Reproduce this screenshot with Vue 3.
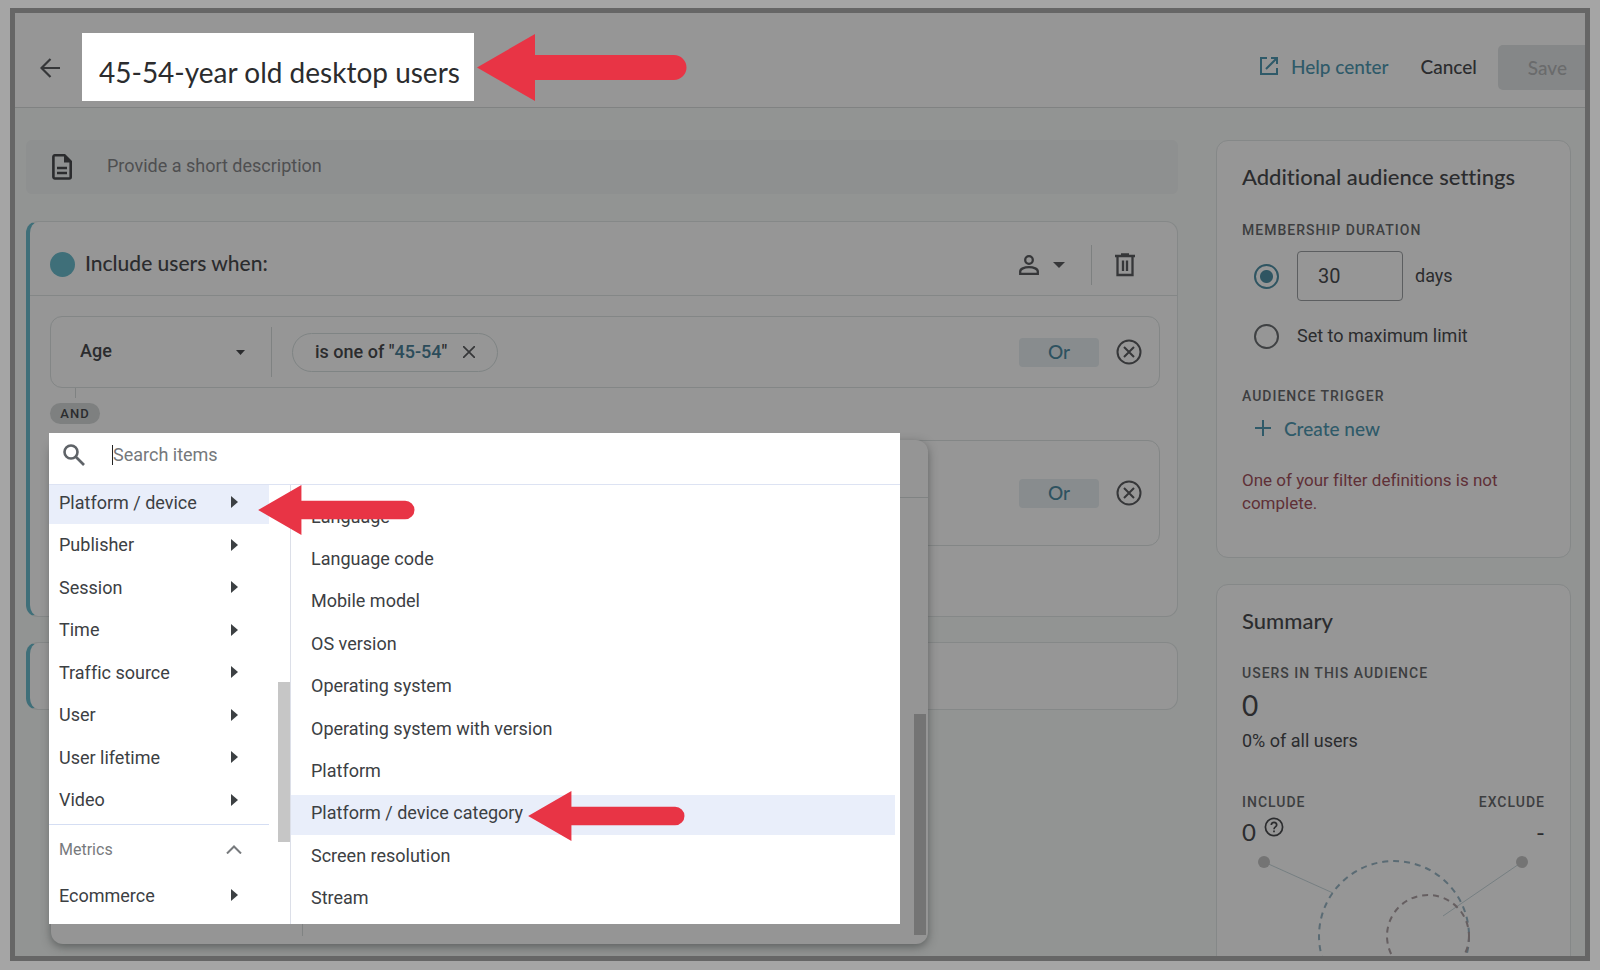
<template>
    <div class="screen">
        <div class="window">
            <header class="topbar">
                <button type="button" class="icon-btn back" aria-label="Back">
                    <svg width="20" height="20" viewBox="0 0 20 20" fill="none" stroke="currentColor" stroke-width="2.2">
                        <path d="M20 10H1.5M10.5 1L1.5 10l9 9" />
                    </svg>
                </button>
                <div class="title-wrap">
                    <input type="text" class="title-input" aria-label="Audience name" v-model="audience.name">
                    <svg class="pointer pointer-title" viewBox="0 0 210 67"><path :d="arrowPath" /></svg>
                </div>
                <nav class="actions">
                    <a href="#" class="help" @click.prevent>
                        <svg width="18" height="18" viewBox="0 0 18 18" fill="none" stroke="currentColor" stroke-width="2">
                            <path d="M7 1H1v16h16v-6M11 1h6v6M17 1L6 12" />
                        </svg>
                        Help center
                    </a>
                    <button type="button" class="cancel">Cancel</button>
                    <button type="button" class="save" disabled>Save</button>
                </nav>
            </header>

            <div class="content">
                <main class="builder">
                    <div class="description">
                        <svg width="20" height="26" viewBox="0 0 20 26">
                            <path d="M3 1.3h9.5l6.2 6.2V23a1.5 1.5 0 0 1-1.5 1.5H3A1.5 1.5 0 0 1 1.4 23V2.8A1.5 1.5 0 0 1 3 1.3z" fill="none" stroke="currentColor" stroke-width="2.6" />
                            <path d="M12 1v7.5h7z" fill="currentColor" />
                            <path d="M5 14h10M5 19h10" stroke="currentColor" stroke-width="2.4" />
                        </svg>
                        <input type="text" aria-label="Description" placeholder="Provide a short description" v-model="audience.description">
                    </div>

                    <section class="card include">
                        <div class="include-head">
                            <span class="dot"></span>
                            <h2>Include users when:</h2>
                            <button type="button" class="icon-btn scope" aria-label="Scope">
                                <svg width="20" height="20" viewBox="0 0 20 20" fill="none" stroke="currentColor" stroke-width="2.3">
                                    <circle cx="10" cy="5" r="3.8" />
                                    <path d="M1.2 18.8v-2.3c0-2.500 4-4.300 8.800-4.300s8.800 1.800 8.800 4.300v2.300z" />
                                </svg>
                                <svg width="12" height="6" viewBox="0 0 12 6"><path d="M0 0h12L6 6z" fill="currentColor" /></svg>
                            </button>
                            <button type="button" class="icon-btn trash" aria-label="Delete group">
                                <svg width="20" height="24" viewBox="0 0 20 24" fill="none" stroke="currentColor" stroke-width="2.3">
                                    <path d="M0 3h20M6 1.5h8M2.5 3v19h15V3M8 7.5v10.5M12 7.5v10.5" />
                                </svg>
                            </button>
                        </div>

                        <div class="conditions">
                            <div class="condition">
                                <div class="field">
                                    <select aria-label="Condition field" v-model="field">
                                        <option>Age</option>
                                    </select>
                                    <svg width="9" height="5" viewBox="0 0 9 5"><path d="M0 0h9L4.5 5z" fill="currentColor" /></svg>
                                </div>
                                <div class="chip">
                                    <span>is one of "<b>45-54</b>"</span>
                                    <button type="button" class="icon-btn" aria-label="Remove filter">
                                        <svg width="12" height="12" viewBox="0 0 12 12" stroke="currentColor" stroke-width="1.7">
                                            <path d="M0 0l12 12M12 0L0 12" />
                                        </svg>
                                    </button>
                                </div>
                                <button type="button" class="or">Or</button>
                                <button type="button" class="icon-btn" aria-label="Remove condition">
                                    <svg width="26" height="26" viewBox="0 0 26 26" fill="none" stroke="currentColor" stroke-width="2">
                                        <circle cx="13" cy="13" r="11.5" /><path d="M8 8l10 10M18 8L8 18" />
                                    </svg>
                                </button>
                            </div>

                            <div class="joiner"><span>AND</span></div>

                            <div class="condition pending">
                                <button type="button" class="or">Or</button>
                                <button type="button" class="icon-btn" aria-label="Remove condition">
                                    <svg width="26" height="26" viewBox="0 0 26 26" fill="none" stroke="currentColor" stroke-width="2">
                                        <circle cx="13" cy="13" r="11.5" /><path d="M8 8l10 10M18 8L8 18" />
                                    </svg>
                                </button>

                                <div class="menu">
                                    <div class="picker">
                                        <div class="search">
                                            <svg width="22" height="22" viewBox="0 0 22 22" fill="none" stroke="currentColor" stroke-width="2.6">
                                                <circle cx="8" cy="8" r="6.5" /><path d="M13 13l8 8" />
                                            </svg>
                                            <span class="caret"></span>
                                            <input type="text" aria-label="Search items" placeholder="Search items" v-model="search">
                                        </div>
                                        <div class="columns">
                                            <div class="groups">
                                                <ul class="group-list">
                                                    <li v-for="group in groups" :key="group">
                                                        <button type="button" :class="{ active: group === activeGroup }" @click="activeGroup = group">
                                                            {{ group }}
                                                            <svg width="7" height="12" viewBox="0 0 7 12"><path d="M0 0l7 6-7 6z" fill="currentColor" /></svg>
                                                        </button>
                                                    </li>
                                                </ul>
                                                <button type="button" class="metrics">
                                                    Metrics
                                                    <svg width="16" height="9" viewBox="0 0 16 9" fill="none" stroke="currentColor" stroke-width="2"><path d="M1 8.5l7-7 7 7" /></svg>
                                                </button>
                                                <button type="button">
                                                    Ecommerce
                                                    <svg width="7" height="12" viewBox="0 0 7 12"><path d="M0 0l7 6-7 6z" fill="currentColor" /></svg>
                                                </button>
                                                <span class="thumb"></span>
                                            </div>
                                            <ul class="items">
                                                <li v-for="item in items" :key="item">
                                                    <button type="button" :class="{ active: item === activeItem }" @click="activeItem = item">{{ item }}</button>
                                                </li>
                                            </ul>
                                        </div>
                                        <svg class="pointer pointer-group" viewBox="0 0 210 67"><path :d="arrowPath" /></svg>
                                        <svg class="pointer pointer-item" viewBox="0 0 210 67"><path :d="arrowPath" /></svg>
                                    </div>
                                    <span class="menu-thumb"></span>
                                </div>
                            </div>
                        </div>
                    </section>

                    <section class="card next-group"></section>
                </main>

                <aside class="side">
                    <section class="card settings">
                        <h2>Additional audience settings</h2>
                        <h3>Membership duration</h3>
                        <div class="option">
                            <input type="radio" id="limited" name="duration" value="limited" v-model="duration">
                            <input type="text" class="days" aria-label="Number of days" v-model="days">
                            <label for="limited">days</label>
                        </div>
                        <div class="option max">
                            <input type="radio" id="max" name="duration" value="max" v-model="duration">
                            <label for="max">Set to maximum limit</label>
                        </div>
                        <h3>Audience trigger</h3>
                        <button type="button" class="create">
                            <svg width="16" height="16" viewBox="0 0 16 16" stroke="currentColor" stroke-width="2"><path d="M8 0v16M0 8h16" /></svg>
                            Create new
                        </button>
                        <p class="error">One of your filter definitions is not complete.</p>
                    </section>

                    <section class="card summary">
                        <h2>Summary</h2>
                        <h3>Users in this audience</h3>
                        <p class="total">0</p>
                        <p class="share">0% of all users</p>
                        <div class="split">
                            <h3>Include</h3>
                            <h3>Exclude</h3>
                        </div>
                        <div class="split values">
                            <span>0
                                <svg width="20" height="20" viewBox="0 0 20 20" fill="none" stroke="currentColor" stroke-width="1.7">
                                    <circle cx="10" cy="10" r="8.6" />
                                    <path d="M7.3 8c0-3.6 5.4-3.6 5.4 0 0 1.9-2.7 2-2.7 4.2M10 13.4v1.9" />
                                </svg>
                            </span>
                            <span>-</span>
                        </div>
                        <svg class="venn" width="303" height="170" viewBox="0 0 303 170" fill="none">
                            <path d="M22 12l69 31M280 12l-79 54" stroke="#767f82" />
                            <circle cx="22" cy="12" r="6" fill="#747474" />
                            <circle cx="280" cy="12" r="6" fill="#747474" />
                            <circle cx="152" cy="86" r="75" stroke="#5a6b74" stroke-width="2" stroke-dasharray="6 5" />
                            <circle cx="186" cy="86" r="41" stroke="#665f61" stroke-width="2" stroke-dasharray="6 5" />
                        </svg>
                    </section>
                </aside>
            </div>
        </div>
    </div>
</template>

<script setup>
    import {ref} from 'vue';

    const audience = ref({
        name: '45-54-year old desktop users',
        description: ''
    });
    const field = ref('Age');
    const search = ref('');
    const duration = ref('limited');
    const days = ref('30');

    const groups = [
        'Platform / device',
        'Publisher',
        'Session',
        'Time',
        'Traffic source',
        'User',
        'User lifetime',
        'Video'
    ];
    const items = [
        'Language',
        'Language code',
        'Mobile model',
        'OS version',
        'Operating system',
        'Operating system with version',
        'Platform',
        'Platform / device category',
        'Screen resolution',
        'Stream'
    ];
    const activeGroup = ref('Platform / device');
    const activeItem = ref('Platform / device category');

    // left pointing arrow, round at the tail
    const arrowPath = 'M0 33.5L58 0v21h139a12.5 12.5 0 0 1 0 25H58v21z';
</script>

<style>
    body {
        background: #a5a5a5;
    }
</style>

<style scoped>
    * {
        box-sizing: border-box;
    }
    h2, h3, p, ul {
        margin: 0;
        padding: 0;
        list-style: none;
    }
    svg {
        display: block;
        flex: none;
    }
    button, input, select {
        font: inherit;
        color: inherit;
        background: none;
        border: 0;
        margin: 0;
        padding: 0;
        outline: 0;
    }
    .screen {
        height: 100vh;
        padding: 8px 10px 9px;
        font-family: Roboto, "Liberation Sans", sans-serif;
        font-size: 18px;
        font-variant-ligatures: none;
        color: #2b2c2e;
    }
    .window {
        display: flex;
        flex-direction: column;
        height: 100%;
        border: 5px solid #666;
        background: #929493;
        overflow: hidden;
    }

    /* top bar */
    .topbar {
        display: flex;
        align-items: center;
        flex: none;
        height: 95px;
        padding-left: 25px;
        background: #969696;
        border-bottom: 1px solid #808282;
    }
    .icon-btn {
        display: flex;
        align-items: center;
        color: #363739;
    }
    .back {
        margin: 16px 22px 0 0;
    }
    .title-wrap {
        position: relative;
        margin-top: 14px;
    }
    .title-input {
        display: block;
        width: 392px;
        height: 68px;
        padding: 10px 0 0 17px;
        background: #fff;
        font-family: Lato, sans-serif;
        font-size: 28px;
    }
    .pointer {
        position: absolute;
        fill: #e83445;
        width: 157px;
        height: 50px;
    }
    .pointer-title {
        left: 394px;
        top: 1px;
        width: 212px;
        height: 67px;
    }
    .actions {
        display: flex;
        align-items: center;
        gap: 32px;
        margin: 14px 0 0 auto;
        font-family: Lato, sans-serif;
        font-size: 19px;
        font-weight: 500;
    }
    .help {
        display: flex;
        align-items: center;
        gap: 13px;
        padding-bottom: 2px;
        color: #2f5a69;
        text-decoration: none;
    }
    .cancel {
        padding-bottom: 2px;
    }
    .save {
        height: 45px;
        padding: 0 18px 0 30px;
        margin-left: -11px;
        border-radius: 5px 0 0 5px;
        background: #858788;
        color: #6a6b6c;
    }

    /* layout */
    .content {
        display: grid;
        grid-template-columns: minmax(0, 1fr) 355px;
        gap: 38px;
        padding: 32px 14px 0 11px;
        align-items: start;
    }
    .card {
        background: #969696;
        border: 1px solid #858888;
        border-radius: 12px;
    }
    .description {
        display: flex;
        align-items: center;
        gap: 35px;
        height: 54px;
        padding: 0 26px;
        margin-bottom: 27px;
        background: #8e9090;
        border-radius: 6px;
    }
    .description input {
        flex: 1;
        height: 30px;
        margin-bottom: 4px;
    }
    .description input::placeholder {
        color: #4e4f51;
        opacity: 1;
    }
    .include, .next-group {
        border-left: 4px solid #3f6f79;
    }
    .include-head {
        display: flex;
        align-items: center;
        height: 74px;
        padding: 12px 22px 0 20px;
        border-bottom: 1px solid #848787;
    }
    .dot {
        width: 25px;
        height: 25px;
        border-radius: 50%;
        background: #3f6f79;
    }
    h2 {
        font-family: Lato, sans-serif;
        font-size: 21px;
        line-height: 24px;
        font-weight: 500;
    }
    .include-head h2 {
        flex: 1;
        padding: 0 0 4px 10px;
    }
    .scope {
        gap: 14px;
        height: 40px;
        padding-right: 26px;
        border-right: 1px solid #7d8080;
    }
    .trash {
        margin-left: 23px;
        padding-right: 20px;
    }
    .conditions {
        padding: 20px 17px 70px 20px;
    }
    .condition {
        position: relative;
        display: flex;
        align-items: center;
        height: 72px;
        padding-right: 17px;
        border: 1px solid #838686;
        border-radius: 12px;
    }
    .field {
        display: flex;
        align-items: center;
        width: 221px;
        height: 50px;
        padding: 0 26px 0 29px;
        border-right: 1px solid #7f8282;
    }
    .field select {
        flex: 1;
        height: 30px;
        padding-bottom: 4px;
        appearance: none;
        font-weight: 500;
    }
    .chip {
        display: flex;
        align-items: center;
        gap: 16px;
        height: 39px;
        margin-left: 20px;
        padding: 0 22px;
        border: 1px solid #7f8484;
        border-radius: 20px;
        font-weight: 500;
    }
    .chip span {
        padding-bottom: 2px;
    }
    .chip b {
        font-weight: 500;
        color: #2c4c5a;
    }
    .or {
        width: 80px;
        height: 29px;
        margin: 0 17px 0 auto;
        border-radius: 4px;
        background: #888c8e;
        color: #2e5260;
        font-family: Lato, sans-serif;
        font-size: 19px;
        line-height: 20px;
        font-weight: 500;
    }
    .joiner {
        position: relative;
        padding: 15px 0 16px;
    }
    .joiner::before {
        content: "";
        position: absolute;
        left: 25px;
        top: 0;
        height: 10px;
        border-left: 1px solid #7f8282;
    }
    .joiner span {
        display: block;
        width: 50px;
        border-radius: 11px;
        background: #7e8080;
        font-size: 13px;
        line-height: 21px;
        font-weight: 500;
        letter-spacing: 1px;
        text-align: center;
    }
    .pending {
        height: 106px;
    }
    .next-group {
        height: 68px;
        margin-top: 25px;
    }

    /* field picker */
    .menu {
        position: absolute;
        left: 0;
        top: -1px;
        z-index: 2;
        width: 877px;
        padding-bottom: 20px;
        background: #959595;
        border-radius: 12px;
        box-shadow: 0 3px 10px rgba(40, 44, 44, 0.5);
    }
    .menu::before {
        content: "";
        position: absolute;
        left: 0;
        right: 0;
        top: 57px;
        border-top: 1px solid #808383;
    }
    .menu::after {
        content: "";
        position: absolute;
        left: 251px;
        bottom: 8px;
        height: 12px;
        border-left: 1px solid #808383;
    }
    .menu-thumb {
        position: absolute;
        right: 2px;
        top: 274px;
        bottom: 9px;
        width: 12px;
        background: #747474;
    }
    .picker {
        position: relative;
        height: 491px;
        margin: -7px 28px 0 -2px;
        background: #fff;
        color: #3c4043;
    }
    .search {
        display: flex;
        align-items: center;
        height: 52px;
        padding: 0 14px 8px;
        border-bottom: 1px solid #dde3f3;
        color: #5f6368;
    }
    .caret {
        width: 1px;
        height: 20px;
        margin-left: 27px;
        background: #222;
    }
    .search input {
        flex: 1;
        height: 30px;
    }
    .search input::placeholder {
        color: #75787b;
        opacity: 1;
    }
    .columns {
        display: grid;
        grid-template-columns: 242px 1fr;
        height: 439px;
        overflow: hidden;
    }
    .groups {
        position: relative;
        padding-right: 21px;
        border-right: 1px solid #dcdfe8;
    }
    .group-list {
        display: grid;
        grid-auto-rows: 1fr;
        height: 343px;
        margin-top: -3px;
        padding-bottom: 2px;
        border-bottom: 1px solid #d5def3;
    }
    .group-list li, .items li {
        display: flex;
        align-items: center;
    }
    .groups button {
        display: flex;
        align-items: center;
        justify-content: space-between;
        width: 100%;
        height: 42px;
        padding: 0 31px 2px 10px;
    }
    .groups button.active, .items button.active {
        background: #e9eefa;
    }
    .groups .metrics {
        height: 50px;
        padding-right: 27px;
        font-size: 16px;
        color: #777a7d;
    }
    .thumb {
        position: absolute;
        right: 0;
        top: 197px;
        width: 12px;
        height: 160px;
        background: #c6c6c6;
    }
    .items {
        display: grid;
        grid-auto-rows: 1fr;
        height: 424px;
        margin: 12px 5px 0 0;
    }
    .items button {
        width: 100%;
        height: 40px;
        padding: 0 0 4px 20px;
        text-align: left;
    }
    .pointer-group {
        left: 209px;
        top: 52px;
    }
    .pointer-item {
        left: 479px;
        top: 358px;
    }

    /* right column */
    .settings {
        padding: 24px 20px 42px 25px;
        margin-bottom: 26px;
    }
    .side h2 {
        font-size: 22px;
    }
    h3 {
        font-size: 14px;
        line-height: 20px;
        font-weight: 500;
        letter-spacing: 1px;
        text-transform: uppercase;
        color: #3d3e40;
    }
    .settings h3 {
        margin-top: 31px;
    }
    .option {
        display: flex;
        align-items: center;
        height: 50px;
        margin-top: 11px;
        padding-left: 12px;
    }
    .option input[type="radio"] {
        appearance: none;
        width: 25px;
        height: 25px;
        margin-right: 18px;
        border: 2px solid #3f4143;
        border-radius: 50%;
    }
    .option input[type="radio"]:checked {
        border-color: #2f5562;
        background: radial-gradient(circle, #2f5562 6px, transparent 7px);
    }
    .option label {
        padding-bottom: 2px;
    }
    .days {
        width: 106px;
        height: 50px;
        margin-right: 12px;
        padding-left: 20px;
        border: 1px solid #5c5e60;
        border-radius: 4px;
        font-size: 20px;
    }
    .max {
        margin-top: 10px;
    }
    .settings .max + h3 {
        margin-top: 25px;
    }
    .create {
        display: flex;
        align-items: center;
        gap: 13px;
        height: 30px;
        margin-top: 7px;
        padding-left: 13px;
        color: #2f5a69;
        font-family: Lato, sans-serif;
        font-size: 19px;
        font-weight: 500;
    }
    .error {
        margin-top: 26px;
        font-size: 17px;
        line-height: 23px;
        color: #5f3037;
    }
    .summary {
        padding: 24px 25px 0;
    }
    .summary h3 {
        margin-top: 30px;
    }
    .total {
        margin-top: 7px;
        font-family: Lato, sans-serif;
        font-size: 28px;
        line-height: 30px;
    }
    .share {
        margin-top: 10px;
        line-height: 22px;
    }
    .split {
        display: flex;
        justify-content: space-between;
    }
    .summary .split h3 {
        margin-top: 40px;
    }
    .values {
        margin-top: 5px;
        font-family: Lato, sans-serif;
        font-size: 24px;
        line-height: 30px;
    }
    .values span {
        display: flex;
        gap: 8px;
    }
    .venn {
        margin-top: 3px;
    }
</style>
